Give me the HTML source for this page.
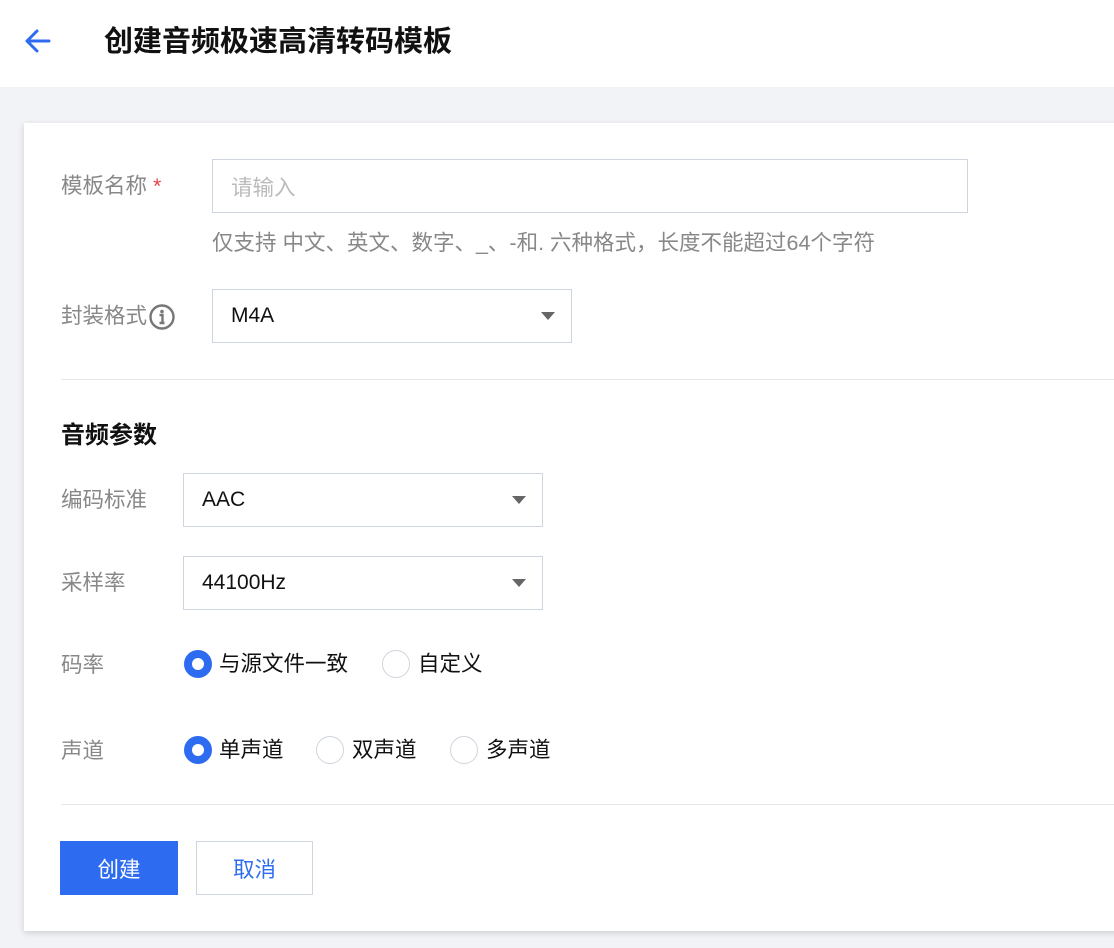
<!DOCTYPE html>
<html><head><meta charset="utf-8"><style>
*{margin:0;padding:0;box-sizing:border-box}
body{width:1114px;height:948px;overflow:hidden;background:#f2f3f7;font-family:"Liberation Sans","Noto Sans CJK SC",sans-serif;position:relative}
.hdr{position:absolute;left:0;top:0;width:1114px;height:87px;background:#fff}
.title{position:absolute;left:104px;top:23px;font-size:29px;font-weight:bold;color:#111;line-height:38px}
.card{position:absolute;left:24px;top:123px;width:1100px;height:808px;background:#fff;box-shadow:0 2px 6px rgba(0,0,0,.15)}
.a{position:absolute;line-height:28px;white-space:nowrap}
.lbl{font-size:21.5px;color:#888}
.box{position:absolute;border:1px solid #cfd5de;background:#fff;font-size:21px;color:#111;padding-left:18px;display:flex;align-items:center}
.tri{position:absolute;right:16px;top:50%;margin-top:-4px;width:0;height:0;border-left:7px solid transparent;border-right:7px solid transparent;border-top:8px solid #666}
.hr{position:absolute;left:61px;width:1060px;height:1px;background:#e5e7eb}
.r{position:absolute;width:28px;height:28px;border-radius:50%;border:1px solid #cfd5de;background:#fff}
.r.on{border:8px solid #2d6cf0}
.t{font-size:21.5px;color:#111}
</style></head><body>
<div class="hdr">
<svg style="position:absolute;left:24px;top:28px" width="28" height="26" viewBox="0 0 28 26"><path d="M25 13H3M13 3L3 13l10 10" stroke="#2d6cf0" stroke-width="3" fill="none" stroke-linecap="round" stroke-linejoin="round"/></svg>
<div class="title">创建音频极速高清转码模板</div>
</div>
<div class="card"></div>
<div class="a lbl" style="left:61px;top:172px">模板名称 <span style="color:#e54545">*</span></div>
<div class="box" style="left:212px;top:159px;width:756px;height:54px;color:#bbb;font-size:21.5px">请输入</div>
<div class="a" style="left:212px;top:229px;font-size:21.5px;color:#888">仅支持 中文、英文、数字、_、-和. 六种格式，长度不能超过64个字符</div>
<div class="a lbl" style="left:61px;top:302px">封装格式</div>
<svg style="position:absolute;left:148px;top:303px" width="28" height="28" viewBox="0 0 28 28"><circle cx="14" cy="14" r="11.5" stroke="#777" stroke-width="2.4" fill="none"/><circle cx="14" cy="8.5" r="1.8" fill="#777"/><path d="M11.5 12h3v8M11.5 20h5" stroke="#777" stroke-width="2.4" fill="none"/></svg>
<div class="box" style="left:212px;top:289px;width:360px;height:54px">M4A<div class="tri"></div></div>
<div class="hr" style="top:379px"></div>
<div class="a" style="left:61px;top:422px;font-size:24px;font-weight:bold;color:#111">音频参数</div>
<div class="a lbl" style="left:61px;top:486px">编码标准</div>
<div class="box" style="left:183px;top:473px;width:360px;height:54px">AAC<div class="tri"></div></div>
<div class="a lbl" style="left:61px;top:569px">采样率</div>
<div class="box" style="left:183px;top:556px;width:360px;height:54px">44100Hz<div class="tri"></div></div>
<div class="a lbl" style="left:61px;top:651px">码率</div>
<div class="r on" style="left:184px;top:650px"></div><div class="a t" style="left:219px;top:650px">与源文件一致</div>
<div class="r" style="left:382px;top:650px"></div><div class="a t" style="left:418px;top:650px">自定义</div>
<div class="a lbl" style="left:61px;top:737px">声道</div>
<div class="r on" style="left:184px;top:736px"></div><div class="a t" style="left:219px;top:736px">单声道</div>
<div class="r" style="left:316px;top:736px"></div><div class="a t" style="left:352px;top:736px">双声道</div>
<div class="r" style="left:450px;top:736px"></div><div class="a t" style="left:486px;top:736px">多声道</div>
<div class="hr" style="top:804px"></div>
<div class="box" style="left:60px;top:841px;width:118px;height:54px;background:#2d6cf0;border-color:#2d6cf0;color:#fff;justify-content:center;padding:0;font-size:21.5px">创建</div>
<div class="box" style="left:196px;top:841px;width:117px;height:54px;color:#2d6cf0;justify-content:center;padding:0;font-size:21.5px">取消</div>
</body></html>
